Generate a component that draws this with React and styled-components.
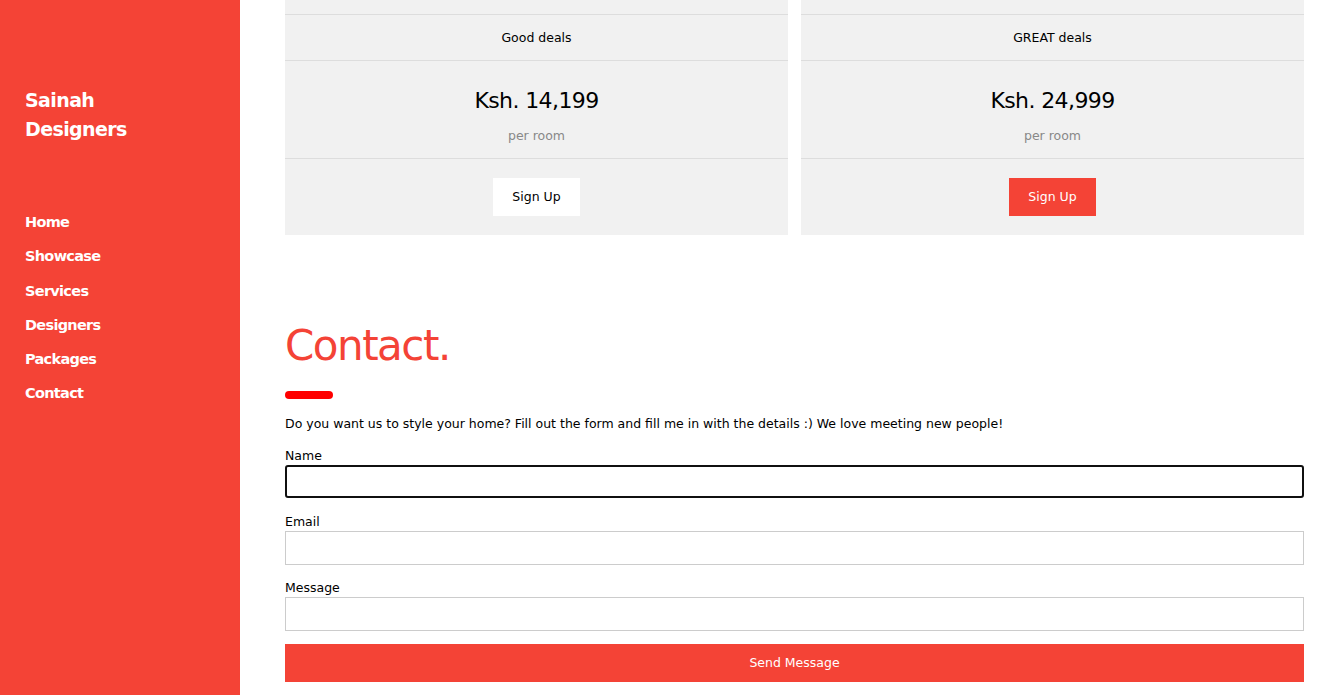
import React from "react";
import styled, { createGlobalStyle } from "styled-components";

const GlobalStyle = createGlobalStyle`
  html, body {
    margin: 0;
    padding: 0;
    font-family: "DejaVu Sans", "Noto Sans", sans-serif;
    color: #000;
    background: #fff;
  }
  * { box-sizing: border-box; }
`;

const Page = styled.div`
  display: flex;
  height: 695px;
  overflow: hidden;
`;

const Sidebar = styled.nav`
  width: 240px;
  flex-shrink: 0;
  background: #f44336;
  color: #fff;
  padding: 86px 25px 0;
  display: flex;
  flex-direction: column;
`;

const Brand = styled.h3`
  margin: 0 0 61px;
  font-size: 19px;
  line-height: 29px;
  font-weight: 600;
  letter-spacing: -0.6px;
`;

const NavLink = styled.a`
  display: block;
  color: #fff;
  font-size: 14.5px;
  font-weight: 700;
  line-height: 34.3px;
  letter-spacing: -0.7px;
  text-decoration: none;
`;

const Main = styled.main`
  flex: 1;
  padding: 0 39px 0 45px;
  display: flex;
  flex-direction: column;
`;

const Plans = styled.div`
  display: grid;
  grid-template-columns: 1fr 1fr;
  gap: 13px;
`;

const Card = styled.ul`
  list-style: none;
  margin: 0;
  padding: 0;
  background: #f1f1f1;
  text-align: center;
`;

const Row = styled.li`
  height: ${(p) => p.$h}px;
  border-bottom: ${(p) => (p.$last ? "none" : "1px solid #ddd")};
  display: flex;
  flex-direction: column;
  align-items: center;
  justify-content: center;
`;

const Deal = styled.span`
  font-size: 12.5px;
`;

const Price = styled.span`
  font-size: 22px;
  line-height: 30px;
  letter-spacing: -0.6px;
  margin-top: 10px;
`;

const Per = styled.span`
  font-size: 12.5px;
  color: #888;
  margin-top: 12px;
`;

const SignUp = styled.button`
  width: 87px;
  height: 38px;
  border: none;
  font-family: inherit;
  font-size: 12.5px;
  background: ${(p) => (p.$primary ? "#f44336" : "#fff")};
  color: ${(p) => (p.$primary ? "#fff" : "#000")};
  cursor: pointer;
  margin-top: -1px;
`;

const Heading = styled.h1`
  margin: 86px 0 0;
  font-size: 42px;
  line-height: 50px;
  font-weight: 500;
  color: #f44336;
  letter-spacing: -1.5px;
`;

const Bar = styled.hr`
  width: 48px;
  height: 8px;
  margin: 20px 0 0;
  border: none;
  border-radius: 4px;
  background: #ff0000;
`;

const Intro = styled.p`
  margin: 16px 0 0;
  font-size: 12.5px;
  line-height: 18px;
`;

const Form = styled.form`
  display: flex;
  flex-direction: column;
  margin-top: 13px;
`;

const Label = styled.label`
  font-size: 12.5px;
  line-height: 19px;
  display: block;
`;

const Field = styled.div`
  margin-bottom: 13.5px;
`;

const Input = styled.input`
  display: block;
  width: 100%;
  height: 34px;
  border: 1px solid #ccc;
  padding: 8px;
  font-family: inherit;
  font-size: 13px;
  outline: none;
  ${(p) =>
    p.$focused &&
    `
    border: 2px solid #101010;
    border-radius: 3px;
    height: 33px;
  `}
`;

const Send = styled.button`
  height: 38px;
  width: 100%;
  border: none;
  background: #f44336;
  color: #fff;
  font-family: inherit;
  font-size: 12.5px;
  margin-top: -1px;
  cursor: pointer;
`;

const nav = ["Home", "Showcase", "Services", "Designers", "Packages", "Contact"];

const plans = [
  { deal: "Good deals", price: "Ksh. 14,199" },
  { deal: "GREAT deals", price: "Ksh. 24,999", primary: true },
];

export default function App() {
  return (
    <>
      <GlobalStyle />
      <Page>
        <Sidebar>
          <Brand>
            Sainah
            <br />
            Designers
          </Brand>
          {nav.map((item) => (
            <NavLink key={item} href="#">
              {item}
            </NavLink>
          ))}
        </Sidebar>
        <Main>
          <Plans>
            {plans.map((p) => (
              <Card key={p.deal}>
                <Row $h={15} />
                <Row $h={46}>
                  <Deal>{p.deal}</Deal>
                </Row>
                <Row $h={98}>
                  <Price>{p.price}</Price>
                  <Per>per room</Per>
                </Row>
                <Row $h={76} $last>
                  <SignUp $primary={p.primary}>Sign Up</SignUp>
                </Row>
              </Card>
            ))}
          </Plans>
          <Heading>Contact.</Heading>
          <Bar />
          <Intro>
            Do you want us to style your home? Fill out the form and fill me in
            with the details :) We love meeting new people!
          </Intro>
          <Form onSubmit={(e) => e.preventDefault()}>
            <Field>
              <Label>Name</Label>
              <Input $focused type="text" />
            </Field>
            <Field>
              <Label>Email</Label>
              <Input type="text" />
            </Field>
            <Field>
              <Label>Message</Label>
              <Input type="text" />
            </Field>
            <Send type="submit">Send Message</Send>
          </Form>
        </Main>
      </Page>
    </>
  );
}
